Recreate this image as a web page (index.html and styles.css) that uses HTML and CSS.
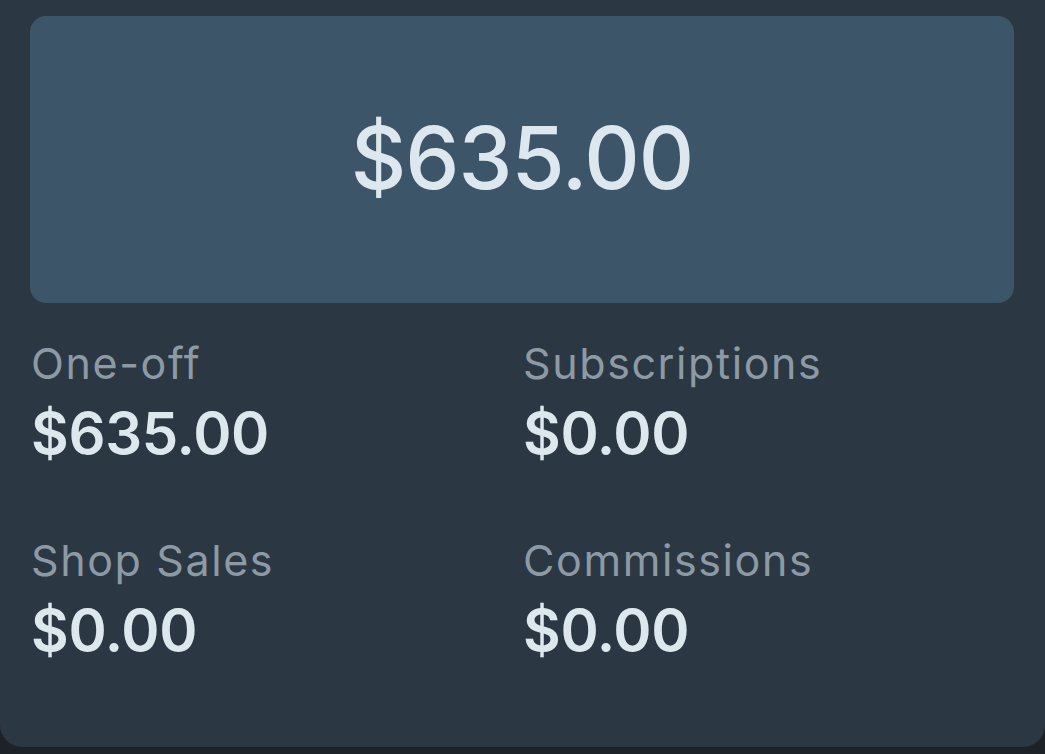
FILE: index.html
```html
<!DOCTYPE html>
<html>
<head>
<meta charset="utf-8">
<link rel="stylesheet" href="styles.css">
</head>
<body>
<div class="card">
  <div class="total">$635.00</div>
  <div class="stats">
    <div class="stat">
      <div class="label">One-off</div>
      <div class="value">$635.00</div>
    </div>
    <div class="stat">
      <div class="label">Subscriptions</div>
      <div class="value">$0.00</div>
    </div>
    <div class="stat">
      <div class="label">Shop Sales</div>
      <div class="value">$0.00</div>
    </div>
    <div class="stat">
      <div class="label">Commissions</div>
      <div class="value">$0.00</div>
    </div>
  </div>
</div>
</body>
</html>
```
FILE: styles.css
```css
html, body {
  margin: 0;
  padding: 0;
}
body {
  background: #1c2228;
  width: 1045px;
  height: 754px;
  overflow: hidden;
  font-family: Inter, "Noto Sans", sans-serif;
}
.card {
  box-sizing: border-box;
  height: 747px;
  background: #2b3743;
  border-radius: 0 0 22px 22px;
  padding: 16px 31px 0 30px;
}
.total {
  height: 287px;
  border-radius: 16px;
  background: #3d5569;
  color: #dde8ee;
  display: flex;
  align-items: center;
  justify-content: center;
  padding-bottom: 4px;
  box-sizing: border-box;
  font-size: 86px;
  font-weight: 500;
  letter-spacing: -1px;
}
.stats {
  display: grid;
  grid-template-columns: 1fr 1fr;
  row-gap: 57px;
  padding-top: 30px;
}
.stat {
  padding-left: 1px;
}
.label {
  color: #8d9aa5;
  font-size: 43px;
  line-height: 60px;
  font-weight: 400;
  letter-spacing: 1.6px;
}
.value {
  color: #dde8ee;
  font-size: 58px;
  line-height: 80px;
  font-weight: 600;
  letter-spacing: -0.3px;
}
```
